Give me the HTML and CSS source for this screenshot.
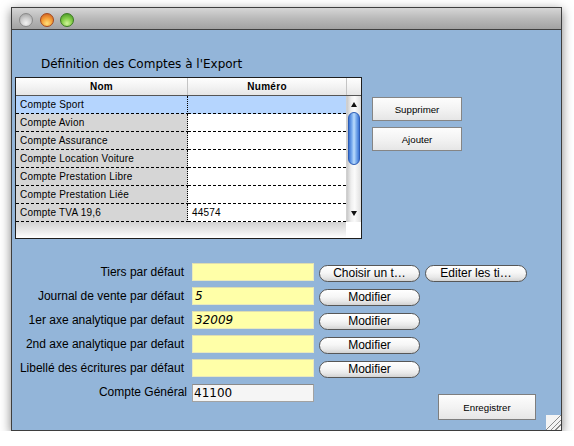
FILE: index.html
```
<!DOCTYPE html>
<html lang="fr">
<head>
<meta charset="utf-8">
<title>Définition des Comptes à l'Export</title>
<link rel="stylesheet" href="styles.css">
</head>
<body>
<div class="window">
  <div class="titlebar">
    <span class="light light-gray"></span>
    <span class="light light-orange"></span>
    <span class="light light-green"></span>
  </div>
  <div class="content">
    <div class="heading">Définition des Comptes à l'Export</div>
    <div class="top">
      <div class="table">
        <div class="thead">
          <div class="th th-nom">Nom</div>
          <div class="th th-num">Numéro</div>
          <div class="th th-corner"></div>
        </div>
        <div class="tbody">
          <div class="rows">
            <div class="row row-sel"><div class="cell c1">Compte Sport</div><div class="cell c2"></div></div>
            <div class="row"><div class="cell c1">Compte Avion</div><div class="cell c2"></div></div>
            <div class="row"><div class="cell c1">Compte Assurance</div><div class="cell c2"></div></div>
            <div class="row"><div class="cell c1">Compte Location Voiture</div><div class="cell c2"></div></div>
            <div class="row"><div class="cell c1">Compte Prestation Libre</div><div class="cell c2"></div></div>
            <div class="row"><div class="cell c1">Compte Prestation Liée</div><div class="cell c2"></div></div>
            <div class="row"><div class="cell c1">Compte TVA 19,6</div><div class="cell c2">44574</div></div>
          </div>
          <div class="scroll">
            <span class="arrow-up"></span>
            <span class="thumb"></span>
            <span class="scroll-space"></span>
            <span class="arrow-down"></span>
          </div>
        </div>
        <div class="filler"><div class="filler-shade"></div><div class="filler-corner"></div></div>
      </div>
      <div class="side-buttons">
        <button class="sq-btn">Supprimer</button>
        <button class="sq-btn">Ajouter</button>
      </div>
    </div>
    <div class="form">
      <div class="label">Tiers par défaut</div>
      <div class="field"></div>
      <button class="pill">Choisir un t…</button>
      <button class="pill">Editer les ti…</button>

      <div class="label row2">Journal de vente par défaut</div>
      <div class="field row2 italic">5</div>
      <button class="pill row2">Modifier</button>

      <div class="label row3">1er axe analytique par defaut</div>
      <div class="field row3 italic">32009</div>
      <button class="pill row3">Modifier</button>

      <div class="label row4">2nd axe analytique par defaut</div>
      <div class="field row4"></div>
      <button class="pill row4">Modifier</button>

      <div class="label row5">Libellé des écritures par défaut</div>
      <div class="field row5"></div>
      <button class="pill row5">Modifier</button>

      <div class="label row6 label-last">Compte Général</div>
      <div class="field row6 field-white">41100</div>
      <button class="sq-btn save-btn">Enregistrer</button>
    </div>
    <div class="grip"></div>
  </div>
</div>
</body>
</html>
```
FILE: styles.css
```
* { box-sizing: border-box; }

html, body {
  margin: 0;
  padding: 0;
  background: #ffffff;
}

body {
  font-family: "Liberation Sans", Arial, sans-serif;
  color: #000;
}

.window {
  margin: 7px 0 0 11px;
  width: 551px;
  border: 1px solid #3e3e3e;
  box-shadow: 0 3px 10px rgba(0, 0, 0, 0.5);
  background: #93b5d9;
}

.titlebar {
  height: 22px;
  border-bottom: 1px solid #404040;
  background: linear-gradient(#d6d6d6, #b9b9b9 50%, #a2a2a2);
  display: flex;
  align-items: flex-start;
  gap: 6.5px;
  padding: 5px 0 0 7px;
}

.light {
  width: 14px;
  height: 14px;
  border-radius: 50%;
  display: block;
}

.light-gray {
  background: radial-gradient(circle at 50% 75%, #f2f2f2 0%, #cfcfcf 45%, #9a9a9a 100%);
  border: 1px solid #8a8a8a;
}

.light-orange {
  background: radial-gradient(circle at 50% 78%, #ffe07a 0%, #f6a23a 45%, #c8531a 100%);
  border: 1px solid #a4481e;
}

.light-green {
  background: radial-gradient(circle at 50% 78%, #d2f59a 0%, #86cf4a 45%, #3e8c1e 100%);
  border: 1px solid #3b7a22;
}

.content {
  position: relative;
  height: 400px;
  background: #93b5d9;
}

.heading {
  font-family: "DejaVu Sans", sans-serif;
  font-size: 12px;
  line-height: 14px;
  padding: 27px 0 0 29px;
  height: 47px;
}

.top {
  display: flex;
  align-items: flex-start;
  padding-left: 3px;
}

.table {
  position: relative;
  width: 347px;
  border: 1px solid #1e1e1e;
  background: #fff;
  font-family: "Liberation Sans", Arial, sans-serif;
  font-size: 10px;
}

.thead {
  display: flex;
  height: 18px;
  border-bottom: 1px solid #555;
  background: linear-gradient(#fefefe, #f3f3f3 50%, #e6e6e6);
}

.th {
  font-weight: bold;
  text-align: center;
  line-height: 17px;
  letter-spacing: 0.3px;
}

.th-nom { width: 172px; border-right: 1px solid #c4c4c4; }
.th-num { width: 158px; }
.th-corner { width: 15px; border-left: 1px solid #c4c4c4; }

.tbody {
  display: flex;
}

.rows {
  width: 330px;
}

.row {
  display: flex;
  height: 18px;
}

.cell {
  height: 18px;
  line-height: 17px;
  padding-left: 4px;
  white-space: nowrap;
  background-image: repeating-linear-gradient(90deg, #000 0 3px, transparent 3px 5px);
  background-size: 100% 1px;
  background-position: left bottom;
  background-repeat: no-repeat;
  letter-spacing: 0.2px;
}

.c1 {
  width: 172px;
  background-color: #d6d6d6;
  border-right: 1px dotted #000;
}

.c2 {
  width: 158px;
  background-color: #ffffff;
}

.row-sel .c1,
.row-sel .c2 {
  background-color: #b5d5fe;
}

.scroll {
  width: 15px;
  height: 126px;
  display: flex;
  flex-direction: column;
  align-items: center;
  background: linear-gradient(90deg, #c9c9c9, #efefef 30%, #fbfbfb 55%, #dedede);
  border-left: 1px solid #d0d0d0;
}

.arrow-up {
  margin-top: 6px;
  width: 0;
  height: 0;
  border-left: 3px solid transparent;
  border-right: 3px solid transparent;
  border-bottom: 5px solid #111;
}

.thumb {
  margin-top: 5px;
  width: 12px;
  height: 53px;
  border-radius: 6px;
  border: 1px solid #2b5cb5;
  background: linear-gradient(90deg, #3a72d2, #7eb0f0 30%, #bcdcfc 50%, #7aaced 72%, #3c74d4);
}

.scroll-space {
  flex: 1;
}

.arrow-down {
  margin-bottom: 6px;
  width: 0;
  height: 0;
  border-left: 3px solid transparent;
  border-right: 3px solid transparent;
  border-top: 5px solid #111;
}

.filler {
  display: flex;
  height: 16px;
}

.filler-shade {
  width: 330px;
  background: linear-gradient(#d2d2d2, #ebebeb 60%, #ffffff);
}

.filler-corner {
  flex: 1;
  background: #fff;
}

.side-buttons {
  display: flex;
  flex-direction: column;
  gap: 6px;
  margin-left: 10px;
  padding-top: 20px;
}

.sq-btn {
  width: 90px;
  height: 24px;
  padding: 0;
  border: 1px solid #858585;
  border-radius: 0;
  background: linear-gradient(#fdfdfd, #f3f3f3 50%, #e6e6e6);
  font-family: "Liberation Sans", Arial, sans-serif;
  font-size: 9.7px;
  color: #000;
}

.form {
  display: grid;
  grid-template-columns: 175px 122px 101px 102px 1fr;
  grid-template-rows: repeat(5, 18px) auto;
  column-gap: 5px;
  row-gap: 6px;
  margin-top: 24px;
}

.label {
  grid-column: 1;
  text-align: right;
  padding-right: 3px;
  font-size: 12px;
  line-height: 18px;
  white-space: nowrap;
}

.field {
  grid-column: 2;
  height: 18px;
  background: #ffffa8;
  border: 1px solid #e9e9bd;
  border-top-color: #deddb0;
  font-family: "DejaVu Sans", sans-serif;
  font-size: 12px;
  line-height: 16px;
  padding-left: 2px;
}

.italic { font-style: italic; }

.pill {
  align-self: end;
  margin-bottom: -1px;
  height: 17px;
  padding: 0;
  border: 1px solid #575757;
  border-radius: 9px;
  background: linear-gradient(#ffffff, #f6f6f6 45%, #e8e8e8 75%, #d2d2d2);
  font-family: "Liberation Sans", Arial, sans-serif;
  font-size: 12px;
  line-height: 15px;
  color: #000;
  white-space: nowrap;
}

.row2 { grid-row: 2; }
.row3 { grid-row: 3; }
.row4 { grid-row: 4; }
.row5 { grid-row: 5; }
.row6 { grid-row: 6; }

.label-last {
  margin-top: 1px;
  line-height: 16px;
  align-self: start;
  padding-right: 0;
}

.field-white {
  margin-top: 1px;
  align-self: start;
  background: #f5f5f5;
  border: 1px solid #a2a2a2;
  border-top-color: #8a8a8a;
  font-style: normal;
  padding-left: 1px;
  line-height: 17px;
}

.save-btn {
  grid-row: 6;
  grid-column: 4 / span 2;
  justify-self: start;
  align-self: start;
  margin: 11px 0 0 13px;
  width: 98px;
  height: 26px;
  border-color: #7e7e7e;
}

.grip {
  position: absolute;
  right: 0;
  bottom: 0;
  width: 15px;
  height: 15px;
  background-color: #f4f4f4;
  background-image: linear-gradient(135deg, transparent 0 48%, #8a8a8a 48% 53%, transparent 53% 64%, #8a8a8a 64% 69%, transparent 69% 80%, #8a8a8a 80% 85%, transparent 85%);
}
```
